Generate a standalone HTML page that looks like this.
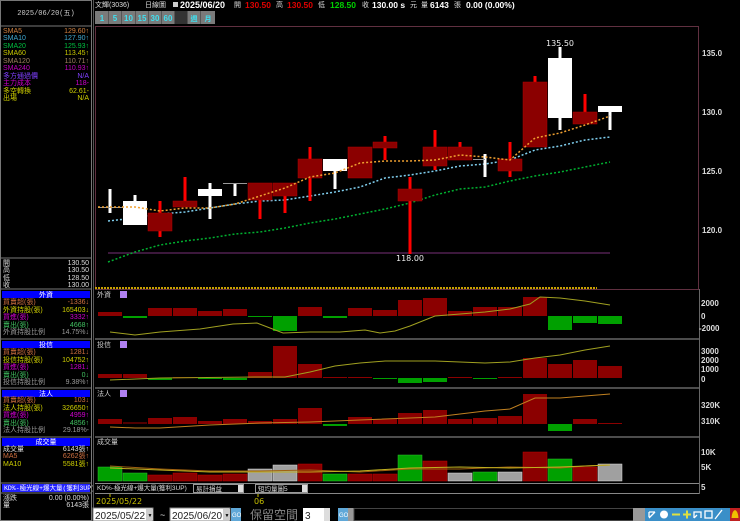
<!DOCTYPE html>
<html><head><meta charset="utf-8"><style>
html,body{margin:0;padding:0;background:#000;width:740px;height:521px;overflow:hidden}
svg{display:block}
text{font-family:"Liberation Sans","Noto Sans CJK TC",sans-serif}
.s{font-size:7px}
.m{font-family:"Liberation Mono","Noto Sans CJK TC",monospace;font-size:7px}
.ax{font-family:"DejaVu Sans",sans-serif;font-size:8px;fill:#ddd;font-weight:bold}
</style></head><body>
<svg width="740" height="521" viewBox="0 0 740 521" xmlns="http://www.w3.org/2000/svg">
<rect width="740" height="521" fill="#000"/>
<g>
<rect x="0.5" y="0.5" width="91" height="520" fill="#000" stroke="#777"/>
<line x1="0" y1="26" x2="92" y2="26" stroke="#777"/>
<text x="46" y="15" text-anchor="middle" class="m" fill="#ccc">2025/06/20(五)</text>
<g class="m">
<text x="3" y="33" fill="#d08040">SMA5</text><text x="89" y="33" text-anchor="end" fill="#d08040">129.60↑</text>
<text x="3" y="40" fill="#40a8d0">SMA10</text><text x="89" y="40" text-anchor="end" fill="#40a8d0">127.90↑</text>
<text x="3" y="48" fill="#00c040">SMA20</text><text x="89" y="48" text-anchor="end" fill="#00c040">125.93↑</text>
<text x="3" y="55" fill="#c8c800">SMA60</text><text x="89" y="55" text-anchor="end" fill="#c8c800">113.45↑</text>
<text x="3" y="63" fill="#a08060">SMA120</text><text x="89" y="63" text-anchor="end" fill="#a08060">110.71↑</text>
<text x="3" y="70" fill="#c000c0">SMA240</text><text x="89" y="70" text-anchor="end" fill="#c000c0">110.93↑</text>
<text x="3" y="78" fill="#8040ff">多方通過價</text><text x="89" y="78" text-anchor="end" fill="#8040ff">N/A</text>
<text x="3" y="85" fill="#d000d0">主力成本</text><text x="89" y="85" text-anchor="end" fill="#d000d0">118-</text>
<text x="3" y="93" fill="#d0d000">多空轉換</text><text x="89" y="93" text-anchor="end" fill="#d0d000">62.61-</text>
<text x="3" y="100" fill="#d0d000">出場</text><text x="89" y="100" text-anchor="end" fill="#d0d000">N/A</text>
</g>
<line x1="0" y1="258" x2="92" y2="258" stroke="#777"/>
<g class="m" fill="#ddd">
<text x="3" y="265">開</text><text x="89" y="265" text-anchor="end">130.50</text>
<text x="3" y="272">高</text><text x="89" y="272" text-anchor="end">130.50</text>
<text x="3" y="280">低</text><text x="89" y="280" text-anchor="end">128.50</text>
<text x="3" y="287">收</text><text x="89" y="287" text-anchor="end">130.00</text>
</g>
<line x1="0" y1="289" x2="92" y2="289" stroke="#777"/>
<rect x="2" y="291" width="88" height="7" fill="#0000ff"/><text x="46" y="297" text-anchor="middle" class="m" fill="#fff">外資</text>
<g class="m">
<text x="3" y="304" fill="#d07040">買賣超(張)</text><text x="89" y="304" text-anchor="end" fill="#d07040">-1336↓</text>
<text x="3" y="312" fill="#d0d000">外資持股(張)</text><text x="89" y="312" text-anchor="end" fill="#d0d000">165403↓</text>
<text x="3" y="319" fill="#d000d0">買進(張)</text><text x="89" y="319" text-anchor="end" fill="#d000d0">3332↑</text>
<text x="3" y="327" fill="#40c060">賣出(張)</text><text x="89" y="327" text-anchor="end" fill="#40c060">4668↑</text>
<text x="3" y="334" fill="#999">外資持股比例</text><text x="89" y="334" text-anchor="end" fill="#999">14.75%↓</text>
</g>
<line x1="0" y1="339" x2="92" y2="339" stroke="#777"/>
<rect x="2" y="341" width="88" height="7" fill="#0000ff"/><text x="46" y="347" text-anchor="middle" class="m" fill="#fff">投信</text>
<g class="m">
<text x="3" y="354" fill="#d07040">買賣超(張)</text><text x="89" y="354" text-anchor="end" fill="#d07040">1281↓</text>
<text x="3" y="362" fill="#d0d000">投信持股(張)</text><text x="89" y="362" text-anchor="end" fill="#d0d000">104752↑</text>
<text x="3" y="369" fill="#d000d0">買進(張)</text><text x="89" y="369" text-anchor="end" fill="#d000d0">1281↓</text>
<text x="3" y="377" fill="#40c060">賣出(張)</text><text x="89" y="377" text-anchor="end" fill="#40c060">0↓</text>
<text x="3" y="384" fill="#999">投信持股比例</text><text x="89" y="384" text-anchor="end" fill="#999">9.38%↑</text>
</g>
<line x1="0" y1="388" x2="92" y2="388" stroke="#777"/>
<rect x="2" y="390" width="88" height="7" fill="#0000ff"/><text x="46" y="396" text-anchor="middle" class="m" fill="#fff">法人</text>
<g class="m">
<text x="3" y="402" fill="#d07040">買賣超(張)</text><text x="89" y="402" text-anchor="end" fill="#d07040">103↓</text>
<text x="3" y="410" fill="#d0d000">法人持股(張)</text><text x="89" y="410" text-anchor="end" fill="#d0d000">326650↑</text>
<text x="3" y="417" fill="#d000d0">買進(張)</text><text x="89" y="417" text-anchor="end" fill="#d000d0">4959↑</text>
<text x="3" y="425" fill="#40c060">賣出(張)</text><text x="89" y="425" text-anchor="end" fill="#40c060">4856↑</text>
<text x="3" y="432" fill="#999">法人持股比例</text><text x="89" y="432" text-anchor="end" fill="#999">29.18%-</text>
</g>
<line x1="0" y1="437" x2="92" y2="437" stroke="#777"/>
<rect x="2" y="438" width="88" height="8" fill="#0000ff"/><text x="46" y="444" text-anchor="middle" class="m" fill="#fff">成交量</text>
<g class="m">
<text x="3" y="451" fill="#ddd">成交量</text><text x="89" y="451" text-anchor="end" fill="#ddd">6143張↑</text>
<text x="3" y="458" fill="#d07040">MA5</text><text x="89" y="458" text-anchor="end" fill="#d07040">6262張↑</text>
<text x="3" y="466" fill="#d0d000">MA10</text><text x="89" y="466" text-anchor="end" fill="#d0d000">5581張↑</text>
</g>
<line x1="0" y1="483" x2="92" y2="483" stroke="#777"/>
<rect x="2" y="484" width="88" height="8" fill="#2020ff"/><text x="4" y="490" class="m" fill="#fff" style="font-size:6.5px">KD%-極光線+爆大量(獲利3UP)</text>
<line x1="0" y1="493" x2="92" y2="493" stroke="#777"/>
<g class="m" fill="#ddd">
<text x="3" y="500">漲跌</text><text x="89" y="500" text-anchor="end">0.00 (0.00%)</text>
<text x="3" y="507">量</text><text x="89" y="507" text-anchor="end">6143張</text>
</g>
</g>
<line x1="93.5" y1="0" x2="93.5" y2="521" stroke="#555"/>

<g class="s">
<text x="95" y="7" fill="#ddd">文輝(3036)</text>
<text x="145" y="7" fill="#ddd">日線圖</text>
<rect x="173" y="2" width="5" height="5" fill="#ccc"/>
<text x="180" y="8" fill="#fff" style="font-size:9px;font-weight:bold">2025/06/20</text>
<text x="234" y="7" fill="#ddd">開</text><text x="245" y="8" fill="#e00000" style="font-size:8.5px;font-weight:bold">130.50</text>
<text x="276" y="7" fill="#ddd">高</text><text x="287" y="8" fill="#e00000" style="font-size:8.5px;font-weight:bold">130.50</text>
<text x="318" y="7" fill="#ddd">低</text><text x="330" y="8" fill="#00d000" style="font-size:8.5px;font-weight:bold">128.50</text>
<text x="362" y="7" fill="#ddd">收</text><text x="372" y="8" fill="#fff" style="font-size:8.5px;font-weight:bold">130.00 s</text>
<text x="410" y="7" fill="#ddd">元</text><text x="421" y="7" fill="#ddd">量</text>
<text x="430" y="8" fill="#fff" style="font-size:8.5px;font-weight:bold">6143</text><text x="454" y="7" fill="#ddd">張</text>
<text x="466" y="8" fill="#fff" style="font-size:8.5px;font-weight:bold">0.00 (0.00%)</text>
</g>
<g>
<rect x="95" y="11" width="120" height="13" fill="#7a7a7a"/>
<g stroke="#555"><line x1="108.5" y1="11" x2="108.5" y2="24"/><line x1="121.5" y1="11" x2="121.5" y2="24"/><line x1="135.5" y1="11" x2="135.5" y2="24"/><line x1="148.5" y1="11" x2="148.5" y2="24"/><line x1="161.5" y1="11" x2="161.5" y2="24"/><line x1="174.5" y1="11" x2="174.5" y2="24"/><line x1="187.5" y1="11" x2="187.5" y2="24"/><line x1="200.5" y1="11" x2="200.5" y2="24"/></g>
<rect x="175" y="11" width="12" height="13" fill="#333"/>
<g fill="#40e0f0" style="font-size:8px;font-weight:bold" text-anchor="middle">
<text x="102" y="21">1</text><text x="115" y="21">5</text><text x="128.5" y="21">10</text><text x="142" y="21">15</text><text x="155" y="21">30</text><text x="168" y="21">60</text>
<text x="194" y="21" style="font-size:7px">週</text><text x="208" y="21" style="font-size:7px">月</text>
</g>
</g>

<rect x="95.5" y="26.5" width="603" height="263" fill="none" stroke="#603040"/>
<line x1="108" y1="253" x2="610" y2="253" stroke="#502050" stroke-width="1.5"/>
<line x1="95" y1="288" x2="597" y2="288" stroke="#c8a000" stroke-width="2" stroke-dasharray="2,1"/>
<g class="ax"><text x="702" y="56">135.0</text><text x="702" y="115">130.0</text><text x="702" y="174">125.0</text><text x="702" y="233">120.0</text></g>

<polyline fill="none" stroke="#00b030" stroke-width="1.5" stroke-dasharray="2,2" points="108,262 135,252 160,245 185,241 210,238 235,234 260,232 285,228 310,223 335,219 360,214 385,209 410,203 435,195 460,189 485,187 510,181 535,176 560,172 585,167 610,162"/>
<polyline fill="none" stroke="#80d0f0" stroke-width="1.5" stroke-dasharray="2,2" points="108,221 135,218 160,214 185,212 210,208 235,204 260,201 285,200 310,196 335,192 360,187 385,178 410,175 435,171 460,166 485,164 510,160 535,150 560,146 585,140 610,137"/>

<g>
<g fill="#ff0000">
<rect x="158.5" y="201" width="3" height="36"/>
<rect x="183.5" y="177" width="3" height="30"/>
<rect x="258.5" y="183" width="3" height="36"/>
<rect x="283.5" y="183" width="3" height="30"/>
<rect x="308.5" y="147" width="3" height="54"/>
<rect x="383.5" y="136" width="3" height="24"/>
<rect x="408.5" y="177" width="3" height="77"/>
<rect x="433.5" y="130" width="3" height="40"/>
<rect x="458.5" y="142" width="3" height="18"/>
<rect x="508.5" y="142" width="3" height="35"/>
<rect x="533.5" y="76" width="3" height="71"/>
<rect x="583.5" y="94" width="3" height="30"/>
</g>
<g fill="#8b0000" stroke="#b00000" stroke-width="0.5">
<rect x="148" y="213" width="24" height="18"/>
<rect x="173" y="201" width="24" height="6"/>
<rect x="248" y="183" width="24" height="17"/>
<rect x="273" y="183" width="24" height="13"/>
<rect x="298" y="159" width="24" height="19"/>
<rect x="348" y="147" width="24" height="31"/>
<rect x="373" y="142" width="24" height="6"/>
<rect x="398" y="189" width="24" height="12"/>
<rect x="423" y="147" width="24" height="19"/>
<rect x="448" y="147" width="24" height="13"/>
<rect x="498" y="159" width="24" height="12"/>
<rect x="523" y="82" width="24" height="65"/>
<rect x="573" y="112" width="24" height="12"/>
</g>
<g fill="#fff">
<rect x="108.5" y="189" width="3" height="24"/>
<rect x="133.5" y="195" width="3" height="8"/>
<rect x="123" y="201" width="24" height="24"/>
<rect x="208.5" y="183" width="3" height="36"/>
<rect x="198" y="189" width="24" height="7"/>
<rect x="233.5" y="183" width="3" height="13"/>
<rect x="333.5" y="159" width="3" height="30"/>
<rect x="323" y="159" width="24" height="12"/>
<rect x="483.5" y="154" width="3" height="23"/>
<rect x="558.5" y="47" width="3" height="83"/>
<rect x="548" y="58" width="24" height="60"/>
<rect x="608.5" y="106" width="3" height="24"/>
<rect x="598" y="106" width="24" height="6"/>
</g>
<g stroke="#999" stroke-width="1"><line x1="98" y1="207.5" x2="123" y2="207.5"/><line x1="223" y1="183.5" x2="247" y2="183.5"/><line x1="473" y1="159.5" x2="485" y2="159.5"/></g>
</g>
<polyline fill="none" stroke="#f0a030" stroke-width="1.5" stroke-dasharray="2,2" points="98,207 135,207 160,211 185,208 210,208 235,204 260,196 285,188 310,177 335,173 360,163 385,161 410,161 435,160 460,155 485,157 510,160 535,138 560,133 585,125 610,116"/>
<text x="560" y="46" text-anchor="middle" fill="#eee" style="font-size:8px;font-family:'DejaVu Sans',sans-serif">135.50</text>
<text x="410" y="261" text-anchor="middle" fill="#eee" style="font-size:8px;font-family:'DejaVu Sans',sans-serif">118.00</text>

<g stroke="#666" stroke-width="1.5">
<line x1="95" y1="339" x2="699" y2="339"/><line x1="95" y1="388" x2="699" y2="388"/><line x1="95" y1="437" x2="699" y2="437"/>
</g>
<line x1="699.5" y1="289" x2="699.5" y2="494" stroke="#666"/>
<line x1="95" y1="483.5" x2="699" y2="483.5" stroke="#888"/>
<line x1="95" y1="493.5" x2="699" y2="493.5" stroke="#888"/>
<g class="s" fill="#ccc">
<text x="97" y="297">外資</text><text x="97" y="347">投信</text><text x="97" y="396">法人</text><text x="97" y="444">成交量</text>
</g>
<g fill="#b080f0"><rect x="120" y="291" width="7" height="7"/><rect x="120" y="341" width="7" height="7"/><rect x="120" y="390" width="7" height="7"/></g>

<g fill="#8b0000">
<rect x="98" y="312" width="24" height="4"/><rect x="148" y="308" width="24" height="8"/><rect x="173" y="308" width="24" height="8"/><rect x="198" y="311" width="24" height="5"/><rect x="223" y="309" width="24" height="7"/><rect x="298" y="307" width="24" height="9"/><rect x="348" y="308" width="24" height="8"/><rect x="373" y="310" width="24" height="6"/><rect x="398" y="300" width="24" height="16"/><rect x="423" y="298" width="24" height="18"/><rect x="448" y="311" width="24" height="5"/><rect x="473" y="307" width="24" height="9"/><rect x="498" y="307" width="24" height="9"/><rect x="523" y="297" width="24" height="19"/>
</g>
<g fill="#00a000">
<rect x="123" y="316" width="24" height="2"/><rect x="248" y="316" width="24" height="1"/><rect x="273" y="316" width="24" height="15"/><rect x="323" y="316" width="24" height="2"/><rect x="548" y="316" width="24" height="14"/><rect x="573" y="316" width="24" height="7"/><rect x="598" y="316" width="24" height="8"/>
</g>
<polyline fill="none" stroke="#a0a020" points="110,332 135,335 160,332 200,329 233,324 257,323 270,328 283,333 310,332 340,332 365,330 380,333 395,331 410,326 420,322 435,316 460,314 485,312 510,309 530,304 540,297 560,298 585,301 610,305"/>
<g class="ax"><text x="701" y="306">2000</text><text x="701" y="319">0</text><text x="699" y="331">-2000</text></g>

<g fill="#8b0000">
<rect x="98" y="374" width="24" height="4"/><rect x="123" y="374" width="24" height="4"/><rect x="173" y="377" width="24" height="1"/><rect x="248" y="372" width="24" height="6"/><rect x="273" y="346" width="24" height="32"/><rect x="298" y="364" width="24" height="14"/><rect x="323" y="377" width="24" height="1"/><rect x="348" y="377" width="24" height="1"/><rect x="448" y="377" width="24" height="1"/><rect x="498" y="377" width="24" height="1"/><rect x="523" y="358" width="24" height="20"/><rect x="548" y="364" width="24" height="14"/><rect x="573" y="360" width="24" height="18"/><rect x="598" y="366" width="24" height="12"/>
</g>
<g fill="#00a000">
<rect x="148" y="378" width="24" height="2"/><rect x="198" y="378" width="24" height="1"/><rect x="223" y="378" width="24" height="2"/><rect x="373" y="378" width="24" height="1"/><rect x="398" y="378" width="24" height="5"/><rect x="423" y="378" width="24" height="4"/><rect x="473" y="378" width="24" height="1"/>
</g>
<polyline fill="none" stroke="#a0a020" points="110,380 160,378 260,377 285,377 310,372 335,366 360,363 385,361 410,361 435,361 460,362 485,363 510,362 535,358 560,355 585,350 610,346"/>
<g class="ax"><text x="701" y="354">3000</text><text x="701" y="363">2000</text><text x="701" y="372">1000</text><text x="701" y="382">0</text></g>

<g fill="#8b0000">
<rect x="98" y="419" width="24" height="5"/><rect x="123" y="422" width="24" height="2" fill="#500000"/><rect x="148" y="418" width="24" height="6"/><rect x="173" y="417" width="24" height="7"/><rect x="198" y="421" width="24" height="3"/><rect x="223" y="419" width="24" height="5"/><rect x="248" y="421" width="24" height="3"/><rect x="273" y="419" width="24" height="5"/><rect x="298" y="408" width="24" height="16"/><rect x="348" y="417" width="24" height="7"/><rect x="373" y="419" width="24" height="5"/><rect x="398" y="413" width="24" height="11"/><rect x="423" y="410" width="24" height="14"/><rect x="448" y="419" width="24" height="5"/><rect x="473" y="418" width="24" height="6"/><rect x="498" y="416" width="24" height="8"/><rect x="523" y="394" width="24" height="30"/><rect x="573" y="419" width="24" height="5"/><rect x="598" y="423" width="24" height="1"/>
</g>
<g fill="#00a000"><rect x="323" y="424" width="24" height="2"/><rect x="548" y="424" width="24" height="7"/></g>
<polyline fill="none" stroke="#c08020" points="110,427 135,428 160,428 210,425 260,423 310,422 360,420 410,418 435,417 460,414 485,411 510,409 535,398 560,398 585,396 610,394"/>
<g class="ax"><text x="701" y="408">320K</text><text x="701" y="424">310K</text></g>

<g fill="#8b0000" stroke="#c00000" stroke-width="0.5">
<rect x="148" y="475" width="24" height="6"/><rect x="173" y="473" width="24" height="8"/><rect x="198" y="475" width="24" height="6"/><rect x="223" y="474" width="24" height="7"/><rect x="298" y="464" width="24" height="17"/><rect x="348" y="474" width="24" height="7"/><rect x="373" y="474" width="24" height="7"/><rect x="423" y="461" width="24" height="20"/><rect x="523" y="452" width="24" height="29"/><rect x="573" y="467" width="24" height="14"/>
</g>
<g fill="#00a000" stroke="#30c030" stroke-width="0.5">
<rect x="98" y="467" width="24" height="14"/><rect x="123" y="473" width="24" height="8"/><rect x="323" y="474" width="24" height="7"/><rect x="398" y="455" width="24" height="26"/><rect x="473" y="472" width="24" height="9"/><rect x="548" y="459" width="24" height="22"/>
</g>
<g fill="#a0a0a0" stroke="#ddd" stroke-width="0.5">
<rect x="248" y="469" width="24" height="12"/><rect x="273" y="465" width="24" height="16"/><rect x="448" y="473" width="24" height="8"/><rect x="498" y="472" width="24" height="9"/><rect x="598" y="464" width="24" height="17"/>
</g>
<polyline fill="none" stroke="#a06010" points="110,466 160,469 210,471 260,471 310,470 360,472 410,469 460,469 510,467 560,468 585,466 610,465"/>
<polyline fill="none" stroke="#c0b020" points="110,468 160,470 210,472 260,472 310,472 360,471 410,468 460,467 510,468 560,467 610,465"/>
<g class="ax"><text x="701" y="455">10K</text><text x="701" y="470">5K</text><text x="701" y="490">5</text></g>

<text x="97" y="490" class="s" fill="#ddd" style="font-size:6.5px">KD%-極光線+爆大量(獲利3UP)</text>
<rect x="193.5" y="484.5" width="50" height="8" fill="#000" stroke="#999"/><text x="196" y="491" class="s" fill="#ddd" style="font-size:6.5px">易計損益</text><rect x="238" y="485" width="5" height="7" fill="#ddd"/>
<rect x="255.5" y="484.5" width="52" height="8" fill="#000" stroke="#999"/><text x="258" y="491" class="s" fill="#ddd" style="font-size:6.5px">短均量圖5</text><rect x="302" y="485" width="5" height="7" fill="#ddd"/>
<line x1="110" y1="494" x2="110" y2="497" stroke="#c8c000"/><line x1="258" y1="494" x2="258" y2="497" stroke="#c8c000"/>
<text x="96" y="504" fill="#c8c000" style="font-size:8px;font-family:'DejaVu Sans',sans-serif">2025/05/22</text>
<text x="254" y="504" fill="#c8c000" style="font-size:8px;font-family:'DejaVu Sans',sans-serif">06</text>

<rect x="93" y="508" width="60" height="13" fill="#fff" stroke="#888"/><text x="95" y="519" fill="#222" style="font-size:10px">2025/05/22</text><rect x="146" y="509" width="7" height="11" fill="#ccc"/><text x="147.5" y="517" style="font-size:5px">▼</text>
<text x="160" y="518" fill="#ddd" style="font-size:9px">~</text>
<rect x="170" y="508" width="60" height="13" fill="#fff" stroke="#888"/><text x="172" y="519" fill="#222" style="font-size:10px">2025/06/20</text><rect x="223" y="509" width="7" height="11" fill="#ccc"/><text x="224.5" y="517" style="font-size:5px">▼</text>
<rect x="231" y="508" width="10" height="13" fill="#60a8d8"/><text x="232" y="517" fill="#fff" style="font-size:6px">GO</text>
<text x="250" y="519" fill="#888" style="font-size:12px;font-family:'Noto Sans CJK TC',sans-serif">保留空間</text>
<rect x="303" y="508" width="27" height="13" fill="#fff"/><text x="305" y="519" fill="#222" style="font-size:10px">3</text><rect x="324" y="508" width="6" height="13" fill="#ddd"/>
<rect x="338" y="508" width="10" height="13" fill="#60a8d8"/><text x="339" y="517" fill="#fff" style="font-size:6px">GO</text>
<rect x="348" y="508" width="6" height="13" fill="#999"/>
<rect x="354" y="508.5" width="283" height="12" fill="#000" stroke="#444"/>
<rect x="633" y="508" width="12" height="13" fill="#999"/>
<rect x="645" y="508" width="85" height="13" fill="#3a8fc8"/>
<g stroke="#fff" stroke-width="1.3" fill="none">
<path d="M649 518 L655 512 M649 512 L655 512 M649 512 L649 517"/>
<circle cx="664" cy="514.5" r="4" fill="#fff" stroke="none"/>
<line x1="672" y1="514.5" x2="680" y2="514.5" stroke="#e0e040" stroke-width="2"/>
<path d="M683 514.5 H691 M687 510.5 V518.5" stroke="#e0e040" stroke-width="2"/>
<path d="M694 518 V512 H701 V518 M694 518 L697 515"/>
<rect x="705" y="511" width="7" height="7"/>
<path d="M715 519 L722 510"/>
</g>
<rect x="730" y="508" width="10" height="13" fill="#c02020"/>
<path d="M731.5 518 Q732 511 735 510 Q738 511 738.5 518 Z" fill="#f0c000"/>
</svg>
</body></html>
